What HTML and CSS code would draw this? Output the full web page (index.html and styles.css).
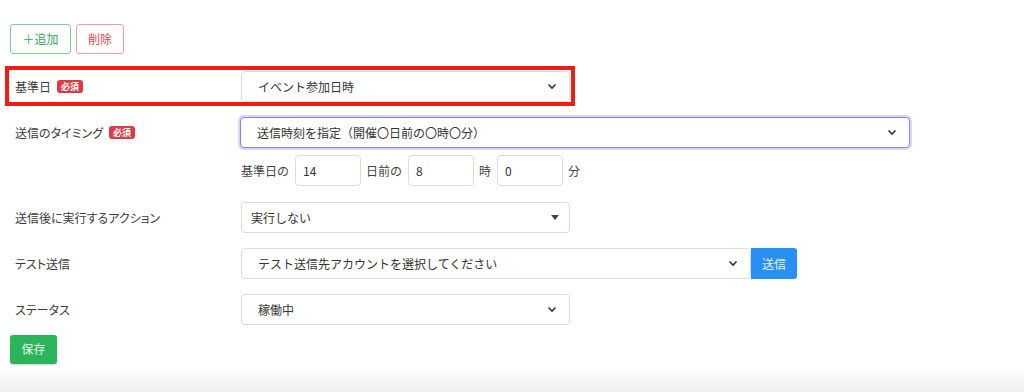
FILE: index.html
```html
<!DOCTYPE html>
<html lang="ja">
<head>
    <meta charset="UTF-8">
    <meta name="viewport" content="width=device-width, initial-scale=1.0">
    <title>配信設定</title>
    <link rel="stylesheet" href="styles.css">
</head>
<body>
    <div class="container">
        <div class="toolbar">
            <button class="btn btn-add">＋追加</button>
            <button class="btn btn-delete">削除</button>
        </div>

        <div class="form-row highlight">
            <div class="form-label">基準日 <span class="badge">必須</span></div>
            <div class="select">
                <span>イベント参加日時</span>
                <svg class="chevron" width="10" height="7" viewBox="0 0 10 7"><path d="M1.5 1.5 L5 5 L8.5 1.5" fill="none" stroke="#333" stroke-width="1.6"/></svg>
            </div>
        </div>

        <div class="form-row row-timing">
            <div class="form-label">送信のタイミング <span class="badge">必須</span></div>
            <div class="select select-focus">
                <span>送信時刻を指定（開催〇日前の〇時〇分）</span>
                <svg class="chevron" width="10" height="7" viewBox="0 0 10 7"><path d="M1.5 1.5 L5 5 L8.5 1.5" fill="none" stroke="#333" stroke-width="1.6"/></svg>
            </div>
        </div>

        <div class="timing-detail">
            <span>基準日の</span>
            <input class="num-input" type="text" value="14">
            <span>日前の</span>
            <input class="num-input" type="text" value="8">
            <span>時</span>
            <input class="num-input" type="text" value="0">
            <span>分</span>
        </div>

        <div class="form-row">
            <div class="form-label">送信後に実行するアクション</div>
            <div class="select select2">
                <span>実行しない</span>
                <svg class="caret" width="8" height="5" viewBox="0 0 8 5"><path d="M0 0 L8 0 L4 5 Z" fill="#444"/></svg>
            </div>
        </div>

        <div class="form-row">
            <div class="form-label">テスト送信</div>
            <div class="select select-wide">
                <span>テスト送信先アカウントを選択してください</span>
                <svg class="chevron" width="10" height="7" viewBox="0 0 10 7"><path d="M1.5 1.5 L5 5 L8.5 1.5" fill="none" stroke="#333" stroke-width="1.6"/></svg>
            </div>
            <button class="btn btn-send">送信</button>
        </div>

        <div class="form-row">
            <div class="form-label">ステータス</div>
            <div class="select">
                <span>稼働中</span>
                <svg class="chevron" width="10" height="7" viewBox="0 0 10 7"><path d="M1.5 1.5 L5 5 L8.5 1.5" fill="none" stroke="#333" stroke-width="1.6"/></svg>
            </div>
        </div>

        <button class="btn btn-save">保存</button>
    </div>
    <div class="footer-fade"></div>
</body>
</html>
```

FILE: styles.css
```css
body {
    font-family: "Noto Sans CJK JP", "Noto Sans", sans-serif;
    font-size: 12px;
    margin: 0;
    padding: 0;
    color: #3a3a3a;
    background-color: #fff;
    height: 392px;
    overflow: hidden;
    position: relative;
}

.container {
    padding: 24px 0 0 10px;
}

.toolbar {
    display: flex;
    gap: 5px;
    margin-bottom: 12px;
}

.btn {
    font-family: inherit;
    font-size: 12px;
    border-radius: 3px;
    cursor: pointer;
    line-height: 1;
}

.btn-add {
    height: 30px;
    width: 61px;
    background: #fff;
    border: 1px solid #7fcf95;
    color: #33a85a;
}

.btn-delete {
    height: 30px;
    width: 48px;
    background: #fff;
    border: 1px solid #f0a0a4;
    color: #e0484f;
}

.form-row {
    display: flex;
    align-items: center;
    margin-bottom: 15px;
}

.form-label {
    box-sizing: border-box;
    width: 231px;
    padding-left: 5px;
    display: flex;
    align-items: center;
    gap: 6px;
    font-feature-settings: "palt";
}

.highlight {
    width: 561px;
    border: 4px solid #f21d12;
    margin: 0 0 11px -5px;
    padding: 1px 1px 0 0;
}

.highlight .form-label {
    width: 232px;
    padding-left: 6px;
}

.badge {
    background: #dc3b45;
    color: #fff;
    font-size: 9px;
    font-weight: bold;
    border-radius: 3px;
    padding: 1px 4px;
    line-height: 11px;
    font-feature-settings: normal;
}

.select {
    box-sizing: border-box;
    width: 329px;
    height: 31px;
    border: 1px solid #dcdcdc;
    border-radius: 4px;
    background: #fff;
    display: flex;
    align-items: center;
    justify-content: space-between;
    padding: 0 12px 0 16px;
    color: #333;
}

.select-focus {
    width: 670px;
    margin-left: -1px;
    border-color: #8585ee;
    box-shadow: 0 0 0 2px rgba(140, 140, 245, 0.35);
}

.row-timing {
    margin-bottom: 7px;
}

.select2 {
    padding: 0 10px 0 9px;
}

.select-wide {
    width: 510px;
}

.timing-detail {
    display: flex;
    align-items: center;
    margin: 0 0 16px 231px;
    color: #444;
}

.num-input {
    box-sizing: border-box;
    width: 66px;
    height: 31px;
    border: 1px solid #dcdcdc;
    border-radius: 4px;
    font-family: inherit;
    font-size: 12px;
    color: #333;
    padding: 0 7px;
    margin: 0 5px 0 6px;
}

.btn-send {
    height: 31px;
    width: 46px;
    border: none;
    background: #2a8ff2;
    color: #eaf4ff;
    border-radius: 0 3px 3px 0;
}

.btn-save {
    height: 29px;
    width: 47px;
    border: none;
    background: #2bb45a;
    color: #e8f8ec;
    margin-top: -7px;
    box-shadow: 0 1px 2px rgba(0, 0, 0, 0.2);
}

.footer-fade {
    position: absolute;
    left: 0;
    right: 0;
    bottom: 0;
    height: 24px;
    background: linear-gradient(to bottom, #ffffff, #eeeeee);
}
```
